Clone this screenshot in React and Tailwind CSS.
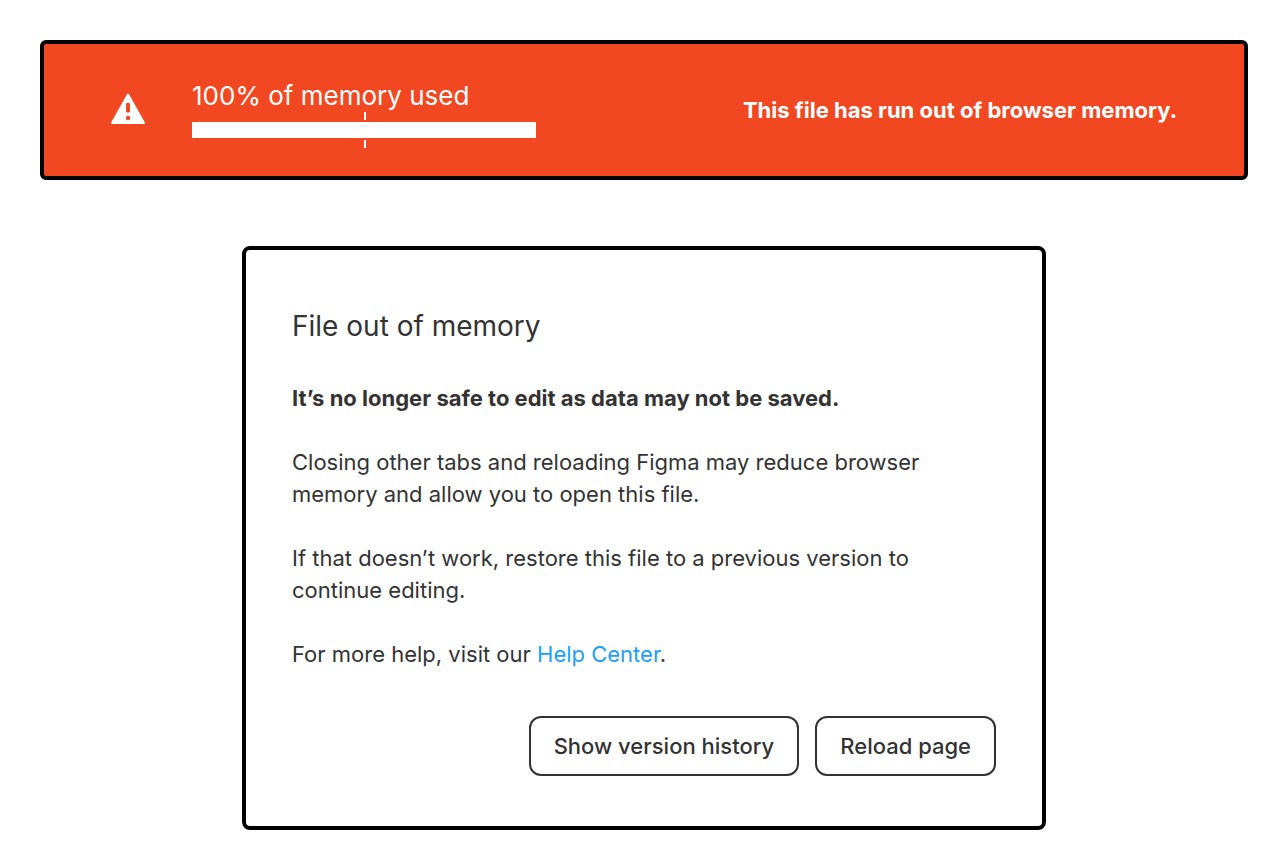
function WarningIcon() {
  return (
    <svg viewBox="0 0 34 34" className="size-[34px] shrink-0" aria-hidden="true">
      <path d="M17 1.5 L33 30 H1 Z" fill="white" stroke="white" strokeWidth="2" strokeLinejoin="round" />
      <rect x="15" y="10" width="4" height="9.4" rx="1" fill="#f24822" />
      <circle cx="17" cy="25" r="2.2" fill="#f24822" />
    </svg>
  );
}

// The ticks above and below the bar mark the half-way point.
function MemoryMeter({ used }) {
  return (
    <div className="w-[344px]">
      <div className="text-[26px] leading-8">{used}% of memory used</div>
      <div className="flex flex-col">
        <span className="ml-[172px] h-2 w-[2px] bg-white" />
        <div className="my-[2px] h-4" role="progressbar" aria-valuenow={used} aria-label="Memory used">
          <div className="h-full bg-white" style={{ width: `${used}%` }} />
        </div>
        <span className="ml-[172px] h-2 w-[2px] bg-white" />
      </div>
    </div>
  );
}

function Banner() {
  return (
    <header className="flex items-center rounded-md border-4 border-black bg-[#f24822] px-[67px] py-7 text-white">
      <WarningIcon />
      <div className="ml-[47px] pt-2">
        <MemoryMeter used={100} />
      </div>
      <p className="ml-auto text-[22px] leading-8 font-bold">This file has run out of browser memory.</p>
    </header>
  );
}

function DialogButton({ children }) {
  return (
    <button type="button" className="rounded-xl border-2 border-[#333] px-[23px] py-3 text-[22px] leading-8 font-medium">
      {children}
    </button>
  );
}

function OutOfMemoryDialog() {
  return (
    <section className="mx-auto mt-[66px] w-full max-w-[804px] rounded-lg border-4 border-black px-[46px] py-[50px] text-[22px] leading-8 text-[#333]">
      <h1 className="mt-2 text-[28px] leading-9">File out of memory</h1>
      <p className="mt-[38px] font-bold">It’s no longer safe to edit as data may not be saved.</p>
      <p className="mt-8">
        Closing other tabs and reloading Figma may reduce browser memory and allow you to open this file.
      </p>
      <p className="mt-8">
        If that doesn’t work, restore this file to a previous version to continue editing.
      </p>
      <p className="mt-8">
        For more help, visit our{" "}
        <a href="#help" className="text-[#18a0fb]">Help Center</a>.
      </p>
      <div className="mt-[46px] flex justify-end gap-4">
        <DialogButton>Show version history</DialogButton>
        <DialogButton>Reload page</DialogButton>
      </div>
    </section>
  );
}

export default function App() {
  return (
    <main className="bg-white px-10 pt-10 font-['Inter',sans-serif]">
      <Banner />
      <OutOfMemoryDialog />
    </main>
  );
}
